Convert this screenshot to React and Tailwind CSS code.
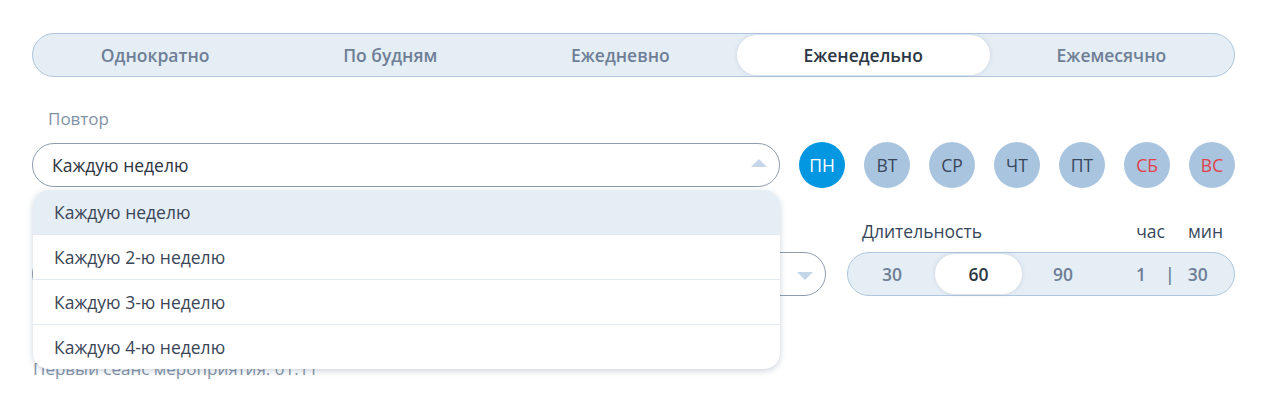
import React from "react";

const tabs = ["Однократно", "По будням", "Ежедневно", "Еженедельно", "Ежемесячно"];
const days = [
  { t: "ПН", active: true },
  { t: "ВТ" },
  { t: "СР" },
  { t: "ЧТ" },
  { t: "ПТ" },
  { t: "СБ", red: true },
  { t: "ВС", red: true },
];
const options = ["Каждую неделю", "Каждую 2-ю неделю", "Каждую 3-ю неделю", "Каждую 4-ю неделю"];

export default function App() {
  return (
    <div
      className="relative w-[1265px] h-[404px] bg-white overflow-hidden"
      style={{ fontFamily: '"Open Sans", "Noto Sans", sans-serif' }}
    >
      <div className="ml-8 w-[1203px] pt-[33px]">
        {/* Tabs */}
        <div className="flex h-[44px] rounded-full border border-[#aec6de] bg-[#e5edf5] p-[1px]">
          {tabs.map((t, i) => (
            <div
              key={t}
              className={
                "flex flex-auto items-center justify-center rounded-full text-[17.5px] font-semibold " +
                (i === 3
                  ? "bg-white text-[#2c3644] shadow-[0_0_4px_rgba(120,140,170,0.25)]"
                  : "text-[#6e7f96]")
              }
            >
              {t}
            </div>
          ))}
        </div>

        {/* Repeat label */}
        <div className="mt-[30px] h-[24px] pl-4 text-[17px] leading-[24px] text-[#8292a6]">Повтор</div>

        {/* Row select + days */}
        <div className="mt-[11px] flex items-center gap-[19px]">
          <div className="relative flex h-[44px] w-[748px] items-center rounded-full border border-[#8d9caf] bg-white pl-[19px] text-[17.5px] text-[#2c3440]">
            Каждую неделю
            <svg className="absolute right-[12px] top-[15px]" width="16" height="8" viewBox="0 0 16 8">
              <path d="M0 8 L8 0 L16 8 Z" fill="#c6d6e9" />
            </svg>
          </div>
          <div className="flex gap-[19px]">
            {days.map((d) => (
              <div
                key={d.t}
                className={
                  "flex h-[46px] w-[46px] items-center justify-center rounded-full text-[17.5px] " +
                  (d.active
                    ? "bg-[#0397e1] text-white"
                    : d.red
                    ? "bg-[#a9c4df] text-[#e2414b]"
                    : "bg-[#a9c4df] text-[#37475b]")
                }
              >
                {d.t}
              </div>
            ))}
          </div>
        </div>

        {/* Row labels */}
        <div className="mt-[31px] flex h-[24px] items-center">
          <div className="w-[830px]" />
          <div className="flex flex-1 items-center text-[17.5px] text-[#37475b]">
            <span>Длительность</span>
            <span className="ml-auto">час</span>
            <span className="ml-[23px] mr-[12px]">мин</span>
          </div>
        </div>

        {/* Row select + duration */}
        <div className="mt-[9px] flex items-center gap-[21px]">
          <div className="relative flex h-[44px] w-[794px] items-center rounded-full border border-[#8d9caf] bg-white pl-[19px]">
            <svg className="absolute right-[12px] top-[19px]" width="16" height="8" viewBox="0 0 16 8">
              <path d="M0 0 L16 0 L8 8 Z" fill="#c6d6e9" />
            </svg>
          </div>
          <div className="flex h-[44px] w-[388px] items-center rounded-full border border-[#aec6de] bg-[#e5edf5] p-[1px] text-[17.5px] font-semibold text-[#6e7f96]">
            <div className="flex h-full w-[86px] items-center justify-center">30</div>
            <div className="flex h-full w-[87px] items-center justify-center rounded-full bg-white text-[#2c3644] shadow-[0_0_4px_rgba(120,140,170,0.25)]">
              60
            </div>
            <div className="flex h-full w-[82px] items-center justify-center">90</div>
            <div className="ml-[32px] flex items-center">
              <span>1</span>
              <span className="ml-[19px]">|</span>
              <span className="ml-[13px]">30</span>
            </div>
          </div>
        </div>

        <div className="mt-[61px] pl-[1px] text-[17px] leading-[24px] text-[#8292a6]">
          Первый сеанс мероприятия: 01.11
        </div>
      </div>

      {/* Dropdown menu */}
      <div className="absolute left-[33px] top-[190px] w-[747px] overflow-hidden rounded-[16px] bg-white shadow-[0_2px_6px_rgba(90,110,140,0.3)]">
        {options.map((o, i) => (
          <div
            key={o}
            className={
              "flex items-center pl-[21px] text-[17.5px] text-[#3a4657] " +
              (i === 0 ? "h-[44px] bg-[#e5edf5]" : "h-[45px] border-t border-[#e3eaf2]")
            }
          >
            {o}
          </div>
        ))}
      </div>
    </div>
  );
}
